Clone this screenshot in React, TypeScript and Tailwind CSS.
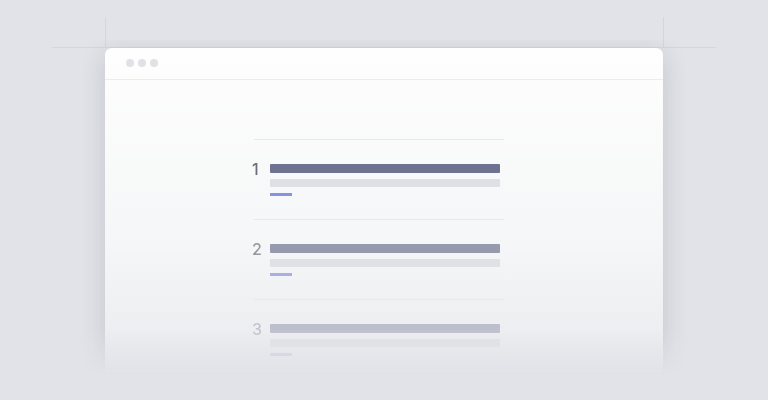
import React from 'react';

const items = [
  { n: '1', num: 'text-[#6c6d75]', bar: 'bg-[#6e7290]', sub: 'bg-[#dfe0e5]', accent: 'bg-[#8792e2]' },
  { n: '2', num: 'text-[#96979f]', bar: 'bg-[#9799ad]', sub: 'bg-[#e0e1e6]', accent: 'bg-[#a8afe6]' },
  { n: '3', num: 'text-[#c3c4ca]', bar: 'bg-[#bcbecc]', sub: 'bg-[#e0e1e5]', accent: 'bg-[#c7cbe5]' },
];

export default function App() {
  return (
    // guides + browser window on a grey canvas
    <div className="relative w-[768px] h-[400px] overflow-hidden bg-[#e1e3e8] font-['Inter',sans-serif]">
      <div className="absolute left-[52px] top-[47px] w-[664px] h-px bg-[#d4d6db]" />
      <div className="absolute left-[105px] top-[17px] w-px h-[31px] bg-[#d4d6db]" />
      <div className="absolute left-[663px] top-[17px] w-px h-[31px] bg-[#d4d6db]" />

      <div className="relative pt-[8px] px-[65px] mt-[40px] h-[360px] [mask-image:linear-gradient(to_bottom,black_80%,transparent_93%)]">
        <div className="w-[558px] mx-[40px] h-[400px] rounded-t-[7px] bg-gradient-to-b from-[#fefefe] via-[#f5f6f7] to-[#e1e3e8] shadow-[0_6px_26px_rgba(40,45,60,0.16)]">
          {/* title bar */}
          <div className="flex items-start gap-[4px] h-[32px] pt-[11px] pl-[21px] border-b border-[#ececef]">
            <span className="w-[8px] h-[8px] rounded-full bg-[#e1e2e6]" />
            <span className="w-[8px] h-[8px] rounded-full bg-[#e1e2e6]" />
            <span className="w-[8px] h-[8px] rounded-full bg-[#e1e2e6]" />
          </div>

          <div className="ml-[149px] w-[250px] pt-[59px]">
            {items.map((it) => (
              <div key={it.n} className="border-t border-[#e8e9ec] pt-[24px] pb-[23px]">
                <div className="flex">
                  <span className={`w-[18px] -ml-[2px] -mt-[4px] text-[16px] leading-[18px] font-medium ${it.num}`}>{it.n}</span>
                  <div className="w-[230px]">
                    <div className={`h-[9px] rounded-[1px] ${it.bar}`} />
                    <div className={`h-[8px] mt-[6px] rounded-[1px] ${it.sub}`} />
                    <div className={`w-[22px] h-[3px] mt-[6px] ${it.accent}`} />
                  </div>
                </div>
              </div>
            ))}
          </div>
        </div>
      </div>
    </div>
  );
}
